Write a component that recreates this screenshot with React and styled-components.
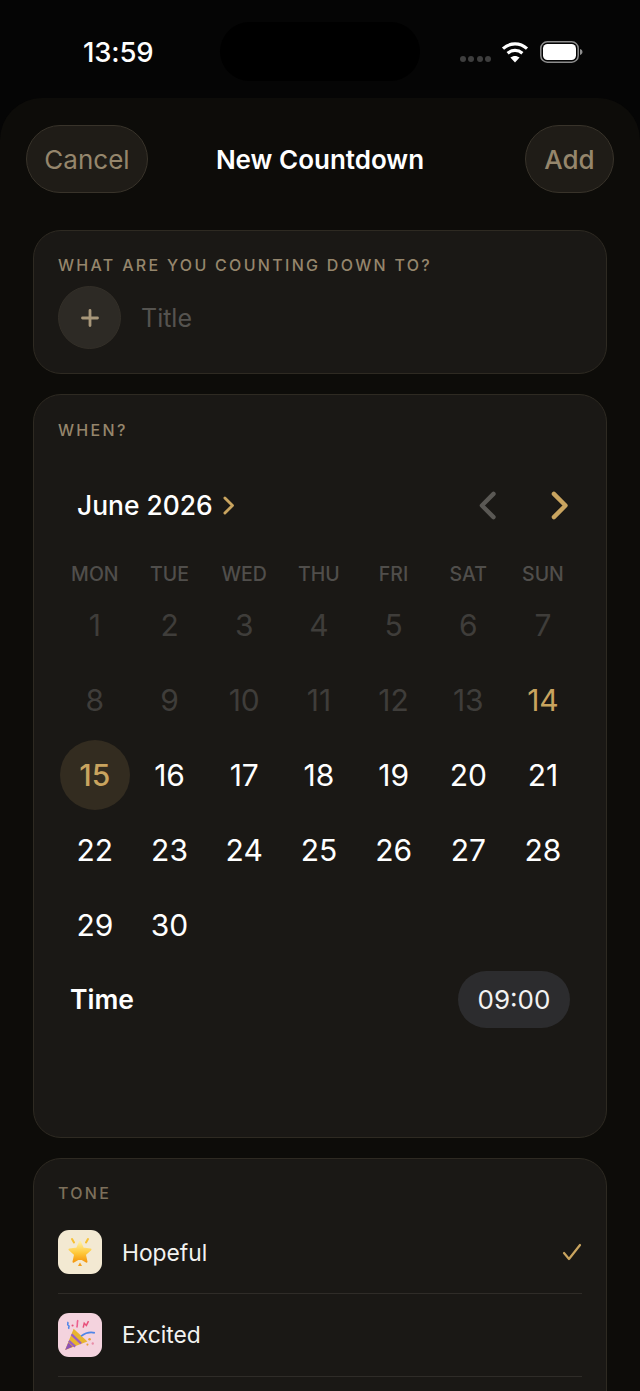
import React from 'react';
import styled, { createGlobalStyle } from 'styled-components';

const GlobalStyle = createGlobalStyle`
  html, body {
    margin: 0;
    padding: 0;
    background: #050505;
  }
  * { box-sizing: border-box; }
`;

const Page = styled.div`
  width: 640px;
  height: 1391px;
  overflow: hidden;
  background: #050505;
  font-family: Inter, 'Liberation Sans', sans-serif;
  color: #fff;
`;

const StatusBar = styled.div`
  height: 98px;
  position: relative;
  display: flex;
  align-items: flex-start;
  justify-content: space-between;
  padding: 36px 56px 0 83px;
`;

const Clock = styled.div`
  font-size: 27.5px;
  line-height: 33px;
  font-weight: 500;
  letter-spacing: -0.2px;
`;

const Island = styled.div`
  position: absolute;
  left: 220px;
  top: 22px;
  width: 200px;
  height: 59px;
  border-radius: 30px;
  background: #000;
`;

const StatusIcons = styled.div`
  display: flex;
  align-items: center;
  gap: 11px;
  height: 32px;
`;

const SignalDots = styled.div`
  display: flex;
  gap: 2.5px;
  margin-top: 14px;
  margin-right: -1px;
`;

const Dot = styled.span`
  width: 6px;
  height: 6px;
  border-radius: 50%;
  background: #3e3e3e;
`;

const Sheet = styled.div`
  height: 1293px;
  background: #0d0c09;
  border-radius: 42px 42px 0 0;
  padding: 27px 33px 0;
`;

const NavBar = styled.div`
  display: grid;
  grid-template-columns: 1fr auto 1fr;
  align-items: center;
  height: 68px;
  margin: 0 -7px 37px;
`;

const NavButton = styled.div`
  height: 68px;
  width: ${(p) => p.$width}px;
  justify-self: ${(p) => p.$end ? 'end' : 'start'};
  border-radius: 34px;
  background: #1f1c17;
  border: 1.5px solid #38332a;
  display: flex;
  align-items: center;
  justify-content: center;
  color: #95866c;
  font-size: 26px;
  font-weight: ${(p) => p.$weight || 400};
`;

const NavTitle = styled.div`
  font-size: 26px;
  font-weight: 600;
`;

const Card = styled.section`
  background: #1a1815;
  border: 1.5px solid #2e2a22;
  border-radius: 28px;
  padding: ${(p) => p.$top || 24}px 24px 0;
  margin-bottom: 20px;
  height: ${(p) => p.$height}px;
`;

const SectionLabel = styled.div`
  font-size: 16px;
  line-height: 20px;
  font-weight: 500;
  letter-spacing: 2.3px;
  color: ${(p) => p.$dim ? '#7d705b' : '#95866c'};
  text-transform: uppercase;
`;

const TitleRow = styled.div`
  display: flex;
  align-items: center;
  gap: 20px;
  margin-top: 11px;
`;

const AddCircle = styled.div`
  width: 63px;
  height: 63px;
  border-radius: 50%;
  background: #2d2a25;
  border: 1px solid #332f28;
  display: flex;
  align-items: center;
  justify-content: center;
`;

const TitlePlaceholder = styled.div`
  font-size: 25px;
  color: #55534f;
`;

const MonthRow = styled.div`
  display: flex;
  align-items: center;
  justify-content: space-between;
  margin: 45px 14px 0 19px;
  height: 40px;
`;

const MonthName = styled.div`
  display: flex;
  align-items: center;
  gap: 10px;
  font-size: 26.4px;
  font-weight: 500;
`;

const MonthArrows = styled.div`
  display: flex;
  align-items: center;
  gap: 54px;
`;

const DayGrid = styled.div`
  display: grid;
  grid-template-columns: repeat(7, 74.7px);
  margin-left: -0.5px;
`;

const WeekdayCell = styled.div`
  height: 40px;
  display: flex;
  align-items: center;
  justify-content: center;
  font-size: 19.5px;
  font-weight: 500;
  color: #504e4b;
`;

const WeekdayRow = styled(DayGrid)`
  margin-top: 29px;
  margin-bottom: -6px;
`;

const DayCell = styled.div`
  height: 74.8px;
  display: flex;
  align-items: center;
  justify-content: center;
`;

const DayNumber = styled.div`
  width: 70px;
  height: 70px;
  border-radius: 50%;
  display: flex;
  align-items: center;
  justify-content: center;
  font-size: 30px;
  font-weight: ${(p) => p.$tone === 'selected' ? 500 : 400};
  color: ${(p) => ({ past: '#3f3d3a', today: '#c9a45f', selected: '#c9a45f' }[p.$tone] || '#fff')};
  background: ${(p) => p.$tone === 'selected' ? '#332c20' : 'transparent'};
`;

const TimeRow = styled.div`
  display: flex;
  align-items: center;
  justify-content: space-between;
  margin: 9px 12px 0 12px;
`;

const TimeLabel = styled.div`
  font-size: 26.5px;
  font-weight: 600;
`;

const TimePill = styled.div`
  width: 112px;
  height: 57px;
  border-radius: 29px;
  background: #2c2c2e;
  display: flex;
  align-items: center;
  justify-content: center;
  font-size: 26px;
  color: #f2f2f2;
`;

const ToneList = styled.div`
  margin-top: 17px;
`;

const ToneRow = styled.div`
  display: flex;
  align-items: center;
  border-bottom: 1px solid #2f2c28;
  margin-top: ${(p) => p.$first ? -7 : 0}px;
  height: ${(p) => p.$first ? 80.5 : 83}px;
  padding-bottom: ${(p) => p.$first ? 1 : 0}px;
`;

const ToneIcon = styled.div`
  width: 44px;
  height: 44px;
  border-radius: 11px;
  background: ${(p) => p.$bg};
  display: flex;
  align-items: center;
  justify-content: center;
  margin-right: 20px;
`;

const ToneName = styled.div`
  flex: 1;
  font-size: 22.8px;
  color: #f2f2f0;
`;

const Chevron = ({ dir = 'right', color, size, weight = 3 }) => (
  <svg width={size * 0.6} height={size} viewBox="0 0 12 20" fill="none">
    <path
      d={dir === 'right' ? 'M2 2l8 8-8 8' : 'M10 2l-8 8 8 8'}
      stroke={color}
      strokeWidth={weight}
      strokeLinecap="round"
      strokeLinejoin="round"
    />
  </svg>
);

const Wifi = () => (
  <svg width="28" height="22" viewBox="0 0 28 22">
    <path fill="none" stroke="#fff" strokeWidth="3.2" d="M2 7.6C9 1.3 19 1.3 26 7.6" />
    <path fill="none" stroke="#fff" strokeWidth="3.2" d="M6.6 12.3c4.4-3.8 10.4-3.8 14.8 0" />
    <path fill="#fff" d="M14 21.5l-4.6-4.9c2.7-2.1 6.5-2.1 9.2 0z" />
  </svg>
);

const Battery = () => (
  <svg width="44" height="22" viewBox="0 0 44 22">
    <rect x="0.8" y="0.8" width="37.4" height="20.4" rx="6.5" fill="none" stroke="#8d8d8d" strokeWidth="1.5" />
    <rect x="3" y="3" width="33" height="16" rx="4.5" fill="#fff" />
    <path d="M40 8v6c1.6-.4 2.5-1.6 2.5-3s-.9-2.6-2.5-3z" fill="#8d8d8d" />
  </svg>
);

const Plus = () => (
  <svg width="18" height="18" viewBox="0 0 18 18">
    <path d="M9 1.500v15M1.500 9h15" stroke="#a8977a" strokeWidth="2.800" strokeLinecap="round" />
  </svg>
);

const Check = () => (
  <svg width="20" height="18" viewBox="0 0 20 18" fill="none">
    <path d="M2 10l5 6L18 2" stroke="#c9a45f" strokeWidth="2.2" strokeLinecap="round" strokeLinejoin="round" />
  </svg>
);

const StarEmoji = () => (
  <svg width="28" height="30" viewBox="0 0 28 30">
    <defs>
      <linearGradient id="starFill" x1="0" y1="0" x2="0" y2="1">
        <stop offset="0" stopColor="#fff0a0" />
        <stop offset="0.55" stopColor="#ffc93a" />
        <stop offset="1" stopColor="#f59a12" />
      </linearGradient>
    </defs>
    <path d="M14 5l3 6.600 7.500.8-5.600 5 1.600 7.300L14 20.900 7.500 24.700l1.600-7.300-5.600-5 7.500-.8z" fill="url(#starFill)" stroke="url(#starFill)" strokeWidth="2" strokeLinejoin="round" />
    <path d="M6 2l2 3.500M22 2l-2 3.500" stroke="#f7c033" strokeWidth="2" strokeLinecap="round" />
    <path d="M14 25.500l2 3.500h-4z" fill="#f2a01c" />
  </svg>
);

const PartyEmoji = () => (
  <svg width="34" height="34" viewBox="0 0 32 32">
    <path d="M2 30L10 10l13 12z" fill="#e8b52e" />
    <path d="M5.500 21.500l6 5.500M8 15.500l9 8.500" stroke="#9a5fc4" strokeWidth="2.200" />
    <path d="M2 30l3-7 4 4z" fill="#8d52b8" />
    <path d="M4 4c2 1-1 2 1 3s-1 2 1 3" fill="none" stroke="#4f86e8" strokeWidth="1.400" />
    <path d="M13 9c1-3 0-4 1-7" fill="none" stroke="#ec5f8e" strokeWidth="1.500" />
    <path d="M19 9l1-4 2 2 2-4" fill="none" stroke="#e84f7a" strokeWidth="1.400" />
    <path d="M17 17c4-3 9-4 13-3" fill="none" stroke="#4f86e8" strokeWidth="1.600" />
    <circle cx="25" cy="20" r="1.200" fill="#e8a13a" />
    <circle cx="28" cy="24" r="1.100" fill="#e88ca8" />
    <circle cx="23" cy="25" r="1" fill="#e8a13a" />
    <circle cx="9" cy="7" r="1" fill="#e84f7a" />
  </svg>
);

const WEEKDAYS = ['Mon', 'Tue', 'Wed', 'Thu', 'Fri', 'Sat', 'Sun'];
const DAYS = Array.from({ length: 30 }, (_, i) => i + 1);

const dayTone = (day) => {
  if (day < 14) return 'past';
  if (day === 14) return 'today';
  if (day === 15) return 'selected';
  return 'normal';
};

const App = () => (
  <Page>
    <GlobalStyle />
    <StatusBar>
      <Clock>13:59</Clock>
      <Island />
      <StatusIcons>
        <SignalDots>
          <Dot /><Dot /><Dot /><Dot />
        </SignalDots>
        <Wifi />
        <Battery />
      </StatusIcons>
    </StatusBar>
    <Sheet>
      <NavBar>
        <NavButton $width={122}>Cancel</NavButton>
        <NavTitle>New Countdown</NavTitle>
        <NavButton $width={89} $weight={500} $end>Add</NavButton>
      </NavBar>

      <Card $height={144}>
        <SectionLabel>What are you counting down to?</SectionLabel>
        <TitleRow>
          <AddCircle><Plus /></AddCircle>
          <TitlePlaceholder>Title</TitlePlaceholder>
        </TitleRow>
      </Card>

      <Card $height={744} $top={25}>
        <SectionLabel>When?</SectionLabel>
        <MonthRow>
          <MonthName>
            June 2026
            <Chevron color="#c9a45f" size={19} />
          </MonthName>
          <MonthArrows>
            <Chevron dir="left" color="#5a5854" size={29} />
            <Chevron color="#c9a45f" size={29} />
          </MonthArrows>
        </MonthRow>
        <WeekdayRow>
          {WEEKDAYS.map((d) => (
            <WeekdayCell key={d}>{d.toUpperCase()}</WeekdayCell>
          ))}
        </WeekdayRow>
        <DayGrid>
          {DAYS.map((day) => (
            <DayCell key={day}>
              <DayNumber $tone={dayTone(day)}>{day}</DayNumber>
            </DayCell>
          ))}
        </DayGrid>
        <TimeRow>
          <TimeLabel>Time</TimeLabel>
          <TimePill>09:00</TimePill>
        </TimeRow>
      </Card>

      <Card $height={400}>
        <SectionLabel $dim>Tone</SectionLabel>
        <ToneList>
          <ToneRow $first>
            <ToneIcon $bg="#f3e9d2"><StarEmoji /></ToneIcon>
            <ToneName>Hopeful</ToneName>
            <Check />
          </ToneRow>
          <ToneRow>
            <ToneIcon $bg="#f4d3de"><PartyEmoji /></ToneIcon>
            <ToneName>Excited</ToneName>
          </ToneRow>
        </ToneList>
      </Card>
    </Sheet>
  </Page>
);

export default App;
